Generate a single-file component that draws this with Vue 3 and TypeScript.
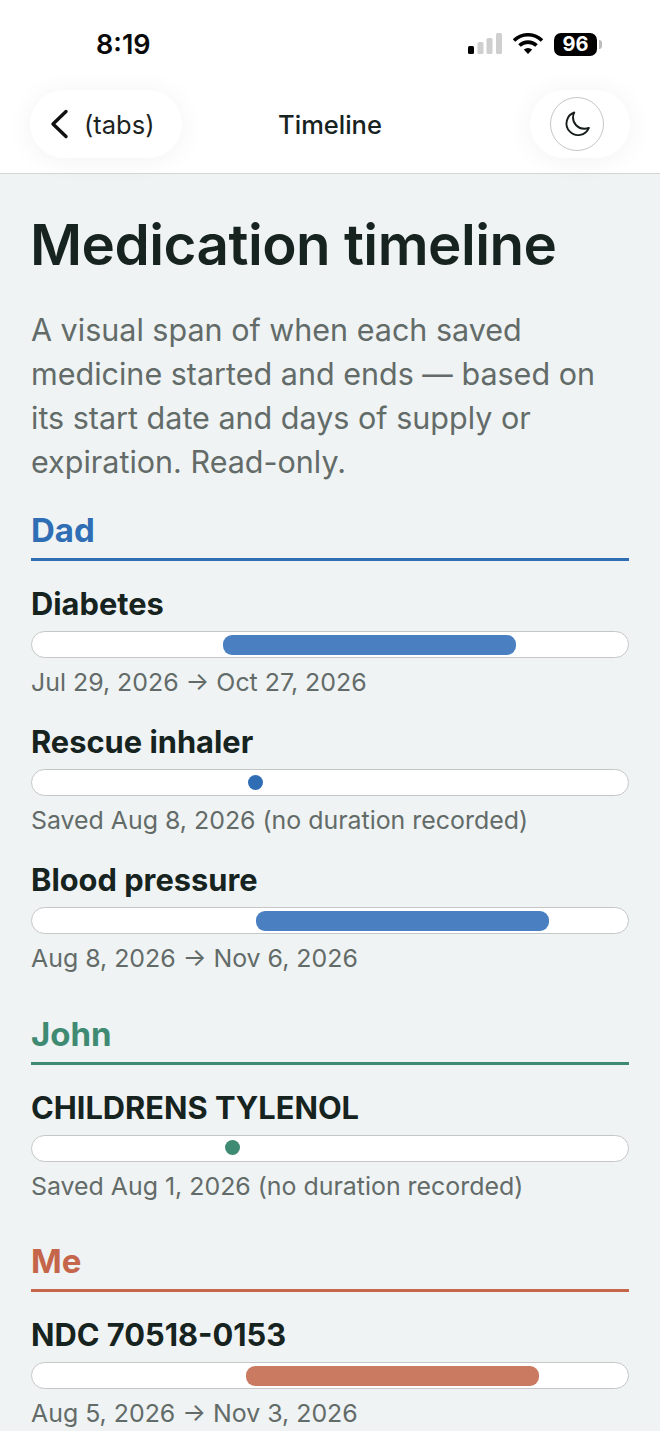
<template>
  <div class="screen">
    <header class="top">
      <div class="status">
        <span class="clock">8:19</span>
        <div class="status-icons">
          <svg class="signal" width="34" height="22" viewBox="0 0 34 22">
            <rect x="0" y="13" width="6" height="8" rx="1.5" fill="#000" />
            <rect x="9.5" y="9" width="6" height="12" rx="1.5" fill="#cfcfcf" />
            <rect x="18.5" y="5" width="6" height="16" rx="1.5" fill="#cfcfcf" />
            <rect x="28" y="0" width="6" height="21" rx="1.5" fill="#cfcfcf" />
          </svg>
          <svg class="wifi" width="30" height="22" viewBox="0 0 30 22">
            <path d="M1 7.5a20 20 0 0 1 28 0" fill="none" stroke="#000" stroke-width="3.6" />
            <path d="M6.5 12.5a12.4 12.4 0 0 1 17 0" fill="none" stroke="#000" stroke-width="3.6" />
            <path d="M10.8 16.6a6 6 0 0 1 8.4 0L15 21z" fill="#000" />
          </svg>
          <div class="battery">
            <span class="battery-level">96</span>
            <span class="battery-cap"></span>
          </div>
        </div>
      </div>
      <nav class="nav">
        <div class="pill back">
          <svg width="20" height="30" viewBox="0 0 20 30">
            <path d="M17 2.5 4 15l13 12.5" fill="none" stroke="#111" stroke-width="3.4" stroke-linecap="round" stroke-linejoin="round" />
          </svg>
          <span>(tabs)</span>
        </div>
        <h2 class="nav-title">Timeline</h2>
        <div class="pill theme">
          <button class="theme-btn" type="button" aria-label="Toggle theme">
            <svg width="30" height="30" viewBox="0 0 24 24">
              <path d="M9.800 2.800a9.300 9.300 0 1 0 11.700 12.300c-1 .4-2.300.7-3.600.7A9 9 0 0 1 8.800 6.800c0-1.400.3-2.900 1-4z" fill="none" stroke="#151d1b" stroke-width="1.500" stroke-linejoin="round" />
            </svg>
          </button>
        </div>
      </nav>
    </header>

    <main class="content">
      <h1>Medication timeline</h1>
      <p class="intro">A visual span of when each saved medicine started and ends — based on its start date and days of supply or expiration. Read-only.</p>

      <section v-for="person in people" :key="person.name" class="person" :class="person.tone">
        <h3 class="person-name">{{ person.name }}</h3>
        <div v-for="med in person.meds" :key="med.name" class="med">
          <h4 class="med-name">{{ med.name }}</h4>
          <div class="track">
            <div v-if="med.width" class="span" :style="{ left: `${med.left}%`, width: `${med.width}%` }"></div>
            <div v-else class="dot" :style="{ left: `${med.left}%` }"></div>
          </div>
          <p class="med-dates">{{ med.dates }}</p>
        </div>
      </section>
    </main>
  </div>
</template>

<script setup lang="ts">
interface Med {
  name: string
  dates: string
  left: number
  width?: number
}

interface Person {
  name: string
  tone: string
  meds: Med[]
}

const people: Person[] = [
  {
    name: 'Dad',
    tone: 'blue',
    meds: [
      { name: 'Diabetes', dates: 'Jul 29, 2026 → Oct 27, 2026', left: 32, width: 49.2 },
      { name: 'Rescue inhaler', dates: 'Saved Aug 8, 2026 (no duration recorded)', left: 36.2 },
      { name: 'Blood pressure', dates: 'Aug 8, 2026 → Nov 6, 2026', left: 37.6, width: 49.1 },
    ],
  },
  {
    name: 'John',
    tone: 'green',
    meds: [
      { name: 'CHILDRENS TYLENOL', dates: 'Saved Aug 1, 2026 (no duration recorded)', left: 32.4 },
    ],
  },
  {
    name: 'Me',
    tone: 'orange',
    meds: [
      { name: 'NDC 70518-0153', dates: 'Aug 5, 2026 → Nov 3, 2026', left: 35.9, width: 49.2 },
    ],
  },
]
</script>

<style>
html,
body {
  margin: 0;
  background: #eff3f3;
}
</style>

<style scoped>
.screen {
  width: 660px;
  height: 1431px;
  overflow: hidden;
  background: #eff3f3;
  font-family: Inter, "Liberation Sans", sans-serif;
  color: #16231f;
}

.top {
  height: 173px;
  background: #fff;
  border-bottom: 1px solid #d4d6d6;
}

.status {
  height: 90px;
  display: flex;
  justify-content: space-between;
  align-items: center;
  padding: 0 58px 2px 96px;
  box-sizing: border-box;
}

.clock {
  font-size: 27px;
  font-weight: 600;
  color: #0a0a0a;
}

.status-icons {
  display: flex;
  align-items: center;
  gap: 11px;
}

.battery {
  display: flex;
  align-items: center;
  gap: 2px;
}

.battery-level {
  width: 43px;
  height: 23px;
  border-radius: 7px;
  background: #000;
  color: #fff;
  font-size: 20px;
  font-weight: 700;
  line-height: 23px;
  text-align: center;
}

.battery-cap {
  width: 3px;
  height: 9px;
  border-radius: 0 3px 3px 0;
  background: #bdbdbd;
}

.nav {
  height: 68px;
  display: grid;
  grid-template-columns: 1fr auto 1fr;
  align-items: center;
  padding: 0 30px;
}

.pill {
  height: 68px;
  border-radius: 34px;
  background: #fff;
  box-shadow: 0 2px 28px rgba(0, 0, 0, 0.055);
  display: flex;
  align-items: center;
  box-sizing: border-box;
}

.back {
  width: 152px;
  padding-left: 19px;
  gap: 15px;
  font-size: 25.5px;
  color: #1c2321;
}

.theme {
  width: 100px;
  justify-self: end;
  padding-left: 20px;
}

.theme-btn {
  width: 54px;
  height: 54px;
  padding: 0;
  border: 1px solid #c4c7c6;
  border-radius: 50%;
  background: #fff;
  display: flex;
  align-items: center;
  justify-content: center;
}

.nav-title {
  margin: 0;
  font-size: 25.5px;
  font-weight: 500;
  color: #16231f;
}

.content {
  padding: 36px 31px 0;
}

h1 {
  margin: 0 0 0 -1px;
  font-size: 56.5px;
  line-height: 70px;
  font-weight: 600;
  letter-spacing: -0.5px;
  color: #16231f;
}

.intro {
  margin: 28px 0 0;
  font-size: 30.5px;
  line-height: 44px;
  color: #636b69;
}

.person {
  margin-top: 26px;
}

.person + .person {
  margin-top: 37.5px;
}

.person-name {
  margin: 0;
  padding-bottom: 8px;
  font-size: 33px;
  line-height: 40px;
  font-weight: 700;
  border-bottom: 3px solid currentColor;
}

.blue .person-name {
  color: #2f6db5;
}

.green .person-name {
  color: #3f8a72;
}

.orange .person-name {
  color: #c5654a;
}

.med {
  margin-top: 24px;
}

.med + .med {
  margin-top: 23px;
}

.med-name {
  margin: 0 0 8px;
  font-size: 30.8px;
  line-height: 38px;
  font-weight: 700;
  color: #16231f;
}

.track {
  position: relative;
  height: 27px;
  box-sizing: border-box;
  border: 1.5px solid #c4c7c6;
  border-radius: 14px;
  background: #fff;
}

.span {
  position: absolute;
  top: 2.500px;
  bottom: 2.500px;
  border-radius: 9px;
}

.dot {
  position: absolute;
  top: 4.500px;
  width: 15px;
  height: 15px;
  border-radius: 50%;
}

.blue .span {
  background: #4a80c2;
}

.blue .dot {
  background: #2f6db5;
}

.green .dot {
  background: #3f8a72;
}

.orange .span {
  background: #c97a60;
}

.med-dates {
  margin: 6px 0 0;
  font-size: 24.9px;
  line-height: 36px;
  color: #636b69;
}
</style>
